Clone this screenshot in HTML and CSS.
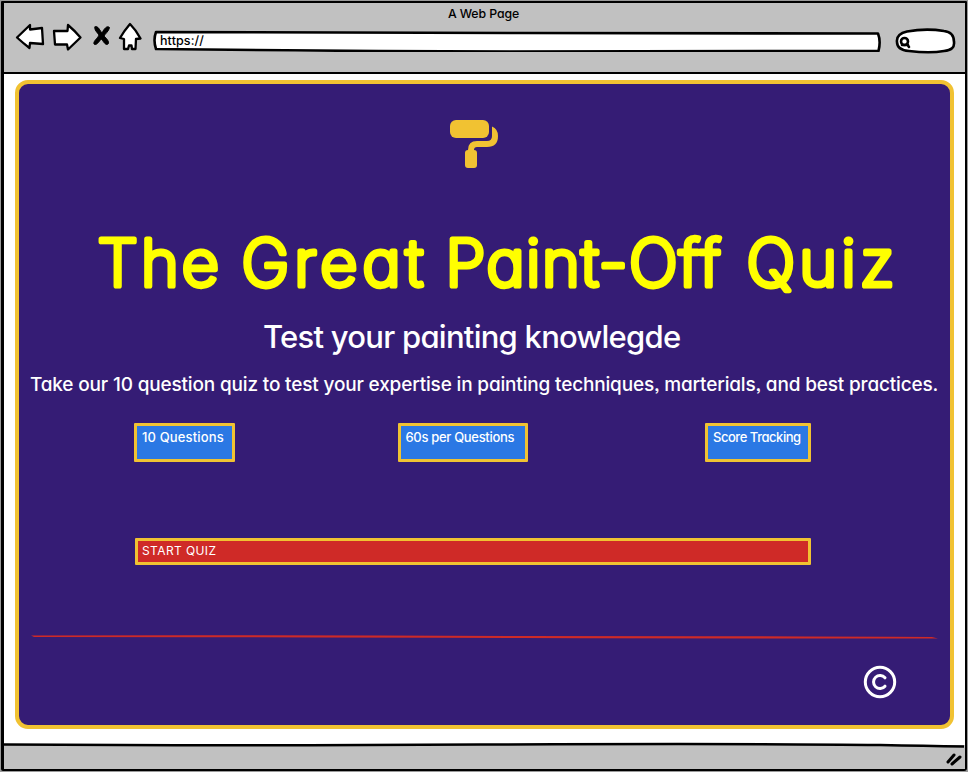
FILE: index.html
```html
<!DOCTYPE html>
<html lang="en">
<head>
<meta charset="utf-8">
<title>A Web Page</title>
<link rel="stylesheet" href="styles.css">
</head>
<body>
<div class="window">
  <header class="chrome">
    <div class="window-title">A Web Page</div>
    <div class="toolbar">
      <svg class="nav" width="128" height="32" viewBox="14 22 128 32">
        <path d="M17 37.500L30 25L30 29.500L42 28L43 44L30 43L29.500 48Q23 43 17 37.500Z"/>
        <path d="M54 31L67.500 31L68 25Q74 30 80.500 37.500L68 49.500L67 44.500L55 44.500Z"/>
        <path class="cross" d="M95 27C98 25 100 31 102 33C104 29 107 25 109.500 27.500C109 31 105 34 104 36C106 38 110 42 108 44C105 46 103 40 101 39C99 42 96 46 94 44C93 41 98 38 99 35C97 32 94 30 95 27Z"/>
        <path d="M130 24Q136 30 140.500 38.500L136 39L135.500 49L132 49L131.500 45.500L129 45.500L128 49L124 49L124 39L120 38Q124 31 130 24Z"/>
      </svg>
      <div class="address">
        <svg width="728" height="22" viewBox="153 30 728 22"><path d="M156 32Q330 32 520 33Q710 33 878 33.500Q881 41 878.500 51Q690 52 510 51.500Q320 51 156 49Q153 40 156 32Z"/></svg>
        <span class="url">https://</span>
      </div>
      <svg class="search" width="62" height="28" viewBox="894 27 62 28">
        <path d="M907 31.500Q926 28 944 31Q954 32 954 42Q955 50 944 51Q930 53.500 909 51Q897 50 897 42Q896 34 907 31.500Z"/>
        <circle cx="904.500" cy="41.500" r="3.500"/><path d="M902 45L908 45M907 44L909 47"/>
      </svg>
    </div>
  </header>
  <main class="page">
    <section class="panel">
      <svg class="roller" width="50" height="50" viewBox="449 119 50 50">
        <rect x="450" y="120" width="39" height="18" rx="6"/>
        <path d="M492 126.500Q498 129 498 136Q498 147 487 147H477Q474 147 474 150Q477 150 477 153V165Q477 168 474 168H468Q465 168 465 165V153Q465 150 468 150Q468 141 477 141H487Q492 141 492 136Z"/>
      </svg>
      <h1>
        <svg width="820" height="80" viewBox="90 222 820 80">
          <text y="285.600"><tspan x="97.500" textLength="121.500">The</tspan> <tspan x="241.500" textLength="181.500">Great</tspan> <tspan x="445.500" textLength="275">Paint-Off</tspan> <tspan x="746.500" textLength="148">Quiz</tspan></text>
        </svg>
      </h1>
      <h2>Test your painting knowlegde</h2>
      <p class="intro">Take our 10 question quiz to test your expertise in painting techniques, marterials, and best practices.</p>
      <div class="features">
        <div class="feature">10 Questions</div>
        <div class="feature timer">60s per Questions</div>
        <div class="feature score">Score Tracking</div>
      </div>
      <button class="start">START QUIZ</button>
      <svg class="rule" width="908" height="5" viewBox="30 634 908 5"><path d="M31 635.500Q260 635 520 636Q760 636 932 637L938 638.500Q760 638.500 520 638Q250 637 34 637Z"/></svg>
      <svg class="copyright" width="34" height="34" viewBox="863 665 34 34"><circle cx="880" cy="682" r="14.700"/><path d="M885 677.800A6.500 6.500 0 1 0 885 686.200"/></svg>
    </section>
  </main>
  <footer class="status">
    <svg width="960" height="27" viewBox="4 742 960 27">
      <path class="edge" d="M3 744.500Q230 746 480 744.500Q760 743.500 880 745Q925 746 965 746.500"/>
      <path class="grip" d="M948 762L954 755M952 764L960 757"/>
    </svg>
  </footer>
</div>
</body>
</html>
```

FILE: styles.css
```css
* { box-sizing: border-box; }
body { margin: 0; background: #9a9a9a; font-family: Inter, "Liberation Sans", sans-serif; font-feature-settings: "cv11", "ss03"; color: #fff; white-space: nowrap; }
svg { display: block; }
.window { width: 966px; height: 770px; margin: 1px 0 0 1px; display: flex; flex-direction: column; background: #fff; border: 2px solid #000; border-left-width: 3px; border-radius: 1px 1px 3px 2px; }
.chrome { flex: none; height: 71px; background: #c1c1c1; border-bottom: 2px solid #000; color: #000; }
.window-title { height: 19px; line-height: 22px; padding-right: 2px; text-align: center; font-size: 12.300px; font-weight: 450; letter-spacing: -.1px; }
.toolbar { display: flex; align-items: flex-start; }
.toolbar svg { fill: #fff; stroke: #000; stroke-width: 2.600; stroke-linejoin: round; stroke-linecap: round; }
.toolbar .nav { margin-left: 10px; stroke-width: 2.300; }
.nav .cross { fill: #000; stroke-width: 1; }
.address { margin: 8px 0 0 11px; display: grid; }
.address > * { grid-area: 1 / 1; }
.url { padding-left: 7px; line-height: 22px; font-size: 12.500px; font-weight: 450; letter-spacing: .1px; }
.search { margin: 5px 0 0 13px; }
.page { flex: 1; padding: 6px 11px 0; }
.panel { width: 939px; height: 649px; background: #351c75; border: 4px solid #f1c232; border-radius: 13px; display: flex; flex-direction: column; align-items: flex-start; }
.roller { margin: 35px 0 0 430px; fill: #f1c232; }
h1, h2, p { margin: 0; }
h1 { margin: 53px 0 0 71px; font-size: 64.500px; font-weight: 200; }
h1 text { fill: #ff0; stroke: #ff0; stroke-width: 5.200px; stroke-linejoin: round; }
h2 { margin: 15px 0 0 244px; height: 40px; line-height: 40px; font-size: 31px; font-weight: 500; letter-spacing: -.74px; }
.intro { margin: 13px 0 0 11px; height: 30px; line-height: 30px; font-size: 19px; font-weight: 500; letter-spacing: -.165px; }
.features { width: 677px; margin: 23px 0 0 115px; display: flex; justify-content: space-between; }
.feature { width: 101px; height: 39px; padding: 1px 5px; background: #2b78e4; border: 3px solid #f1c232; border-radius: 1px; font-size: 13px; font-weight: 450; line-height: 20px; letter-spacing: .15px; }
.feature.timer { width: 130px; margin-left: -15px; letter-spacing: -.32px; }
.feature.score { width: 106px; letter-spacing: -.46px; }
.start { width: 676px; height: 27px; margin: 76px 0 0 116px; padding: 0 4px 2px; text-align: left; background: #cf2a27; border: 3px solid #f1c232; border-radius: 1px; color: #fff; font: 12px/18px Inter, "Liberation Sans", sans-serif; letter-spacing: .4px; }
.rule { margin: 69px 0 0 11px; fill: #cf2a27; }
.copyright { margin: 26px 0 0 844px; fill: none; stroke: #fff; stroke-width: 3; stroke-linecap: round; }
.status { flex: none; height: 27px; background: linear-gradient(#fff 3px, #c1c1c1 3px); }
.status svg { fill: none; stroke: #000; stroke-width: 2.500; }
.status .grip { stroke-width: 3; stroke-linecap: round; }
```
